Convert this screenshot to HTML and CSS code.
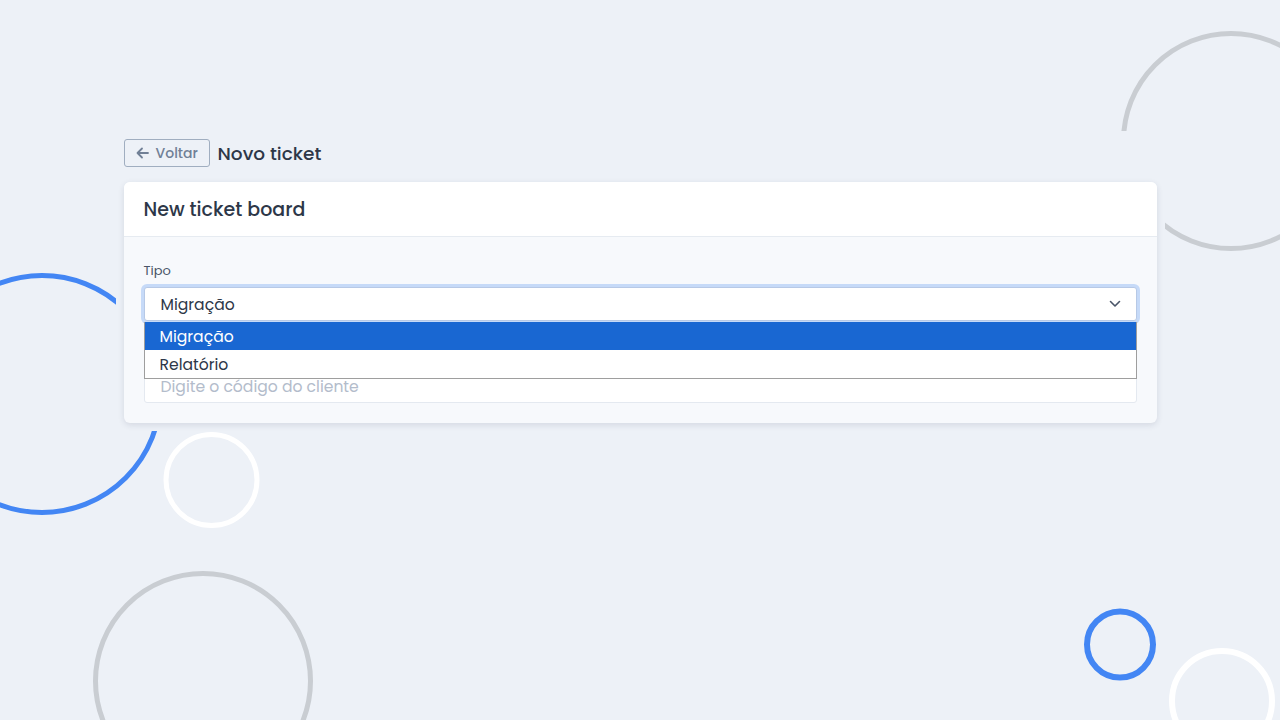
FILE: index.html
```html
<!DOCTYPE html>
<html lang="pt-BR">
<head>
<meta charset="utf-8">
<title>Novo ticket</title>
<link rel="stylesheet" href="styles.css">
</head>
<body>
<svg class="decor" width="1280" height="720" viewBox="0 0 1280 720" aria-hidden="true">
  <circle cx="1231" cy="141" r="107.5" fill="none" stroke="#c9cdd2" stroke-width="5"/>
  <circle cx="42" cy="394" r="118.5" fill="none" stroke="#4386f4" stroke-width="5"/>
  <circle cx="211.5" cy="480" r="45.5" fill="none" stroke="#ffffff" stroke-width="5"/>
  <circle cx="203" cy="681" r="107.5" fill="none" stroke="#c9cdd2" stroke-width="5"/>
  <circle cx="1120" cy="644.5" r="33" fill="none" stroke="#4386f4" stroke-width="6"/>
  <circle cx="1222" cy="701" r="50" fill="none" stroke="#ffffff" stroke-width="6"/>
</svg>

<main class="page">
  <div class="topbar">
    <button class="back-btn" type="button">
      <svg class="back-icon" width="13" height="12" viewBox="0 0 13 12" aria-hidden="true">
        <path d="M12 6H1.5M6 1.5L1.5 6L6 10.5" fill="none" stroke="#718096" stroke-width="1.8" stroke-linecap="round" stroke-linejoin="round"/>
      </svg>
      <span>Voltar</span>
    </button>
    <h1 class="page-title">Novo ticket</h1>
  </div>

  <section class="card">
    <header class="card-header">
      <h2 class="card-title">New ticket board</h2>
    </header>
    <div class="card-body">
      <div class="field">
        <label class="label">Tipo</label>
        <div class="select-wrap">
          <div class="select">
            <span>Migração</span>
            <svg class="chevron" width="12" height="8" viewBox="0 0 12 8" aria-hidden="true">
              <path d="M1.5 1.5L6 6L10.5 1.5" fill="none" stroke="#4a5568" stroke-width="1.6" stroke-linecap="round" stroke-linejoin="round"/>
            </svg>
          </div>
          <ul class="dropdown">
            <li class="option selected">Migração</li>
            <li class="option">Relatório</li>
          </ul>
        </div>
      </div>
      <div class="field">
        <span class="label label-hidden" aria-hidden="true"></span>
        <div class="input"><span class="placeholder">Digite o código do cliente</span></div>
      </div>
    </div>
  </section>
</main>
</body>
</html>
```

FILE: styles.css
```css
* { box-sizing: border-box; }

html, body {
  margin: 0;
  padding: 0;
}

body {
  width: 1280px;
  height: 720px;
  overflow: hidden;
  position: relative;
  background: #edf1f7;
  font-family: "Poppins", "Open Sans", "Noto Sans", sans-serif;
  color: #2d3748;
}

.decor {
  position: absolute;
  left: 0;
  top: 0;
  z-index: 0;
}

.page {
  position: relative;
  z-index: 1;
  width: 1049px;
  margin: 131px auto 0;
  padding: 8px;
  background: #edf1f7;
}

.topbar {
  display: flex;
  align-items: center;
  gap: 8px;
  height: 28px;
  margin-bottom: 15px;
}

.back-btn {
  display: flex;
  align-items: center;
  gap: 7px;
  height: 28px;
  width: 86px;
  padding: 0 0 0 11px;
  border: 1px solid #a0aec0;
  border-radius: 3px;
  background: transparent;
  color: #718096;
  font-family: inherit;
  font-size: 14px;
  font-weight: 500;
  line-height: 1;
}

.page-title {
  margin: 0;
  font-size: 18.5px;
  font-weight: 500;
  color: #2d3748;
}

.card {
  background: #f7f9fc;
  border-radius: 6px;
  box-shadow: 0 2px 6px rgba(30, 45, 70, 0.12);
}

.card-header {
  background: #ffffff;
  height: 55px;
  padding: 0 20px;
  display: flex;
  align-items: center;
  border-bottom: 1px solid #e6ebf1;
  border-radius: 6px 6px 0 0;
}

.card-title {
  margin: 0;
  font-size: 19px;
  font-weight: 500;
  color: #2d3748;
}

.card-body {
  padding: 24px 20px 20px;
  display: flex;
  flex-direction: column;
  gap: 22px;
}

.field {
  display: flex;
  flex-direction: column;
  gap: 6px;
}

.label {
  font-size: 13px;
  line-height: 20px;
  height: 20px;
  color: #4a5568;
}

.select-wrap {
  position: relative;
  z-index: 2;
}

.select {
  height: 34px;
  background: #ffffff;
  border: 1px solid #b7c9e6;
  border-radius: 3px;
  box-shadow: 0 0 0 3px #c6daf8;
  padding: 0 16px;
  display: flex;
  align-items: center;
  justify-content: space-between;
  font-size: 15.6px;
  color: #2d3748;
}

.chevron { margin-right: -1px; }

.dropdown {
  position: absolute;
  left: 0;
  right: 0;
  top: 35px;
  margin: 0;
  padding: 0;
  list-style: none;
  background: #ffffff;
  border: 1px solid #9e9e9e;
  border-top: none;
}

.option {
  height: 28px;
  padding: 0 15px;
  display: flex;
  align-items: center;
  font-size: 15.6px;
  color: #2d3748;
}

.option.selected {
  background: #1967d2;
  color: #ffffff;
}

.input {
  height: 34px;
  background: #ffffff;
  border: 1px solid #e4e9f0;
  border-radius: 3px;
  padding: 0 16px;
  display: flex;
  align-items: center;
  font-size: 15.6px;
}

.placeholder { color: #b3bccb; }
```
